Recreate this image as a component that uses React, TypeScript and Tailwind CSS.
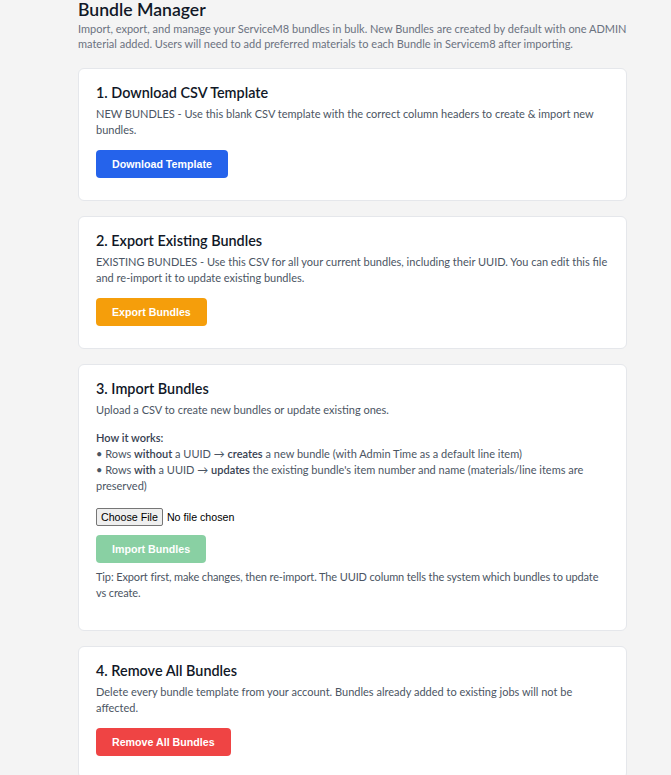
import React from "react";

const body = "font-['Lato',sans-serif]";
const btn =
  "h-[28px] rounded-[4px] px-[16px] font-['Liberation_Sans',Arial,sans-serif] text-[10.67px] font-bold text-white";
const desc = "text-[11px] leading-[16px] text-[#4b5563]";

function Card({ title, children }: { title: string; children: React.ReactNode }) {
  return (
    <div className="rounded-[6px] border border-[#e5e7eb] bg-white px-[17px] pt-[14px] pb-[22px]">
      <h2 className="mb-[3px] text-[14.4px] leading-[20px] font-semibold text-[#111827]">{title}</h2>
      {children}
    </div>
  );
}

export default function App() {
  return (
    <div className={`min-h-screen bg-[#f4f4f4] ${body}`}>
      <div className="ml-[78px] w-[549px]">
        <h1 className="text-[17.6px] leading-[20px] font-semibold text-[#111827]">Bundle Manager</h1>
        <p className="mt-[1px] text-[11px] leading-[15px] text-[#6b7280]">
          Import, export, and manage your ServiceM8 bundles in bulk. New Bundles are created by default with one ADMIN
          material added. Users will need to add preferred materials to each Bundle in Servicem8 after importing.
        </p>

        <div className="mt-[17px] flex flex-col gap-[15px]">
          <Card title="1. Download CSV Template">
            <p className={desc}>
              NEW BUNDLES - Use this blank CSV template with the correct column headers to create &amp; import new
              bundles.
            </p>
            <button className={`${btn} mt-[12px] bg-[#2563eb]`}>Download Template</button>
          </Card>

          <Card title="2. Export Existing Bundles">
            <p className={desc}>
              EXISTING BUNDLES - Use this CSV for all your current bundles, including their UUID. You can edit this file
              and re-import it to update existing bundles.
            </p>
            <button className={`${btn} mt-[12px] bg-[#f59e0b]`}>Export Bundles</button>
          </Card>

          <Card title="3. Import Bundles">
            <p className={desc}>Upload a CSV to create new bundles or update existing ones.</p>
            <div className={`mt-[12px] ${desc}`}>
              <p className="font-semibold text-[#374151]">How it works:</p>
              <p>
                • Rows <strong className="font-semibold text-[#374151]">without</strong> a UUID →{" "}
                <strong className="font-semibold text-[#374151]">creates</strong> a new bundle (with Admin Time as a
                default line item)
              </p>
              <p>
                • Rows <strong className="font-semibold text-[#374151]">with</strong> a UUID →{" "}
                <strong className="font-semibold text-[#374151]">updates</strong> the existing bundle's item number and
                name (materials/line items are preserved)
              </p>
            </div>
            <div className="mt-[14px] h-[16px] font-['Liberation_Sans',Arial,sans-serif] text-[10.67px]">
              <input
                type="file"
                className="text-[10.67px] file:mr-[4px] file:rounded-[2px] file:border file:border-[#767676] file:bg-[#efefef] file:px-[4px]"
              />
            </div>
            <button disabled className={`${btn} mt-[11px] block bg-[#16a34a] opacity-50`}>
              Import Bundles
            </button>
            <p className={`mt-[6px] mb-[7px] tracking-[-0.12px] ${desc}`}>
              Tip: Export first, make changes, then re-import. The UUID column tells the system which bundles to update
              vs create.
            </p>
          </Card>

          <Card title="4. Remove All Bundles">
            <p className={desc}>
              Delete every bundle template from your account. Bundles already added to existing jobs will not be
              affected.
            </p>
            <button className={`${btn} mt-[12px] bg-[#ef4444]`}>Remove All Bundles</button>
          </Card>
        </div>
      </div>
    </div>
  );
}
